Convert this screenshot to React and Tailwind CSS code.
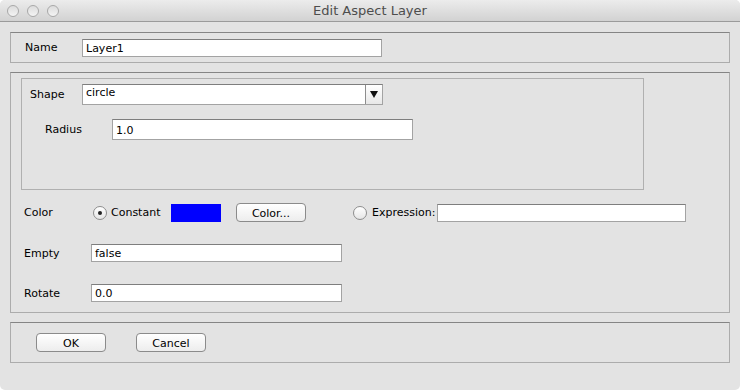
import React from "react";

const font = { fontFamily: '"Lucida Grande", "DejaVu Sans", sans-serif' };

const Field = ({ value, className }) => (
  <div
    className={`h-[18px] bg-white border border-[#a3a3a3] border-t-[#7e7e7e] flex items-center pl-[3px] pt-px text-[11px] text-black leading-none ${className}`}
  >
    {value}
  </div>
);

const Radio = ({ checked }) => (
  <div className="w-[14px] h-[14px] rounded-full border border-[#8d8d8d] bg-gradient-to-b from-white to-[#e6e6e6] flex items-center justify-center shrink-0">
    {checked && <div className="w-[4px] h-[4px] rounded-full bg-[#222]" />}
  </div>
);

const Button = ({ label, className }) => (
  <div
    className={`h-[19px] rounded-[4px] border border-[#8b8b8b] bg-gradient-to-b from-white to-[#ededed] flex items-center justify-center pt-px text-[11px] text-black leading-none ${className}`}
  >
    {label}
  </div>
);

const Panel = ({ className, children }) => (
  <div className={`border border-[#acacac] border-t-[#858585] ${className}`}>
    {children}
  </div>
);

export default function App() {
  return (
    <div className="w-[740px] h-[390px] bg-white" style={font}>
      <div className="w-[740px] h-[390px] bg-[#e3e3e3] rounded-[5px] overflow-hidden flex flex-col">
        {/* title bar */}
        <div className="h-[22px] shrink-0 bg-gradient-to-b from-[#ececec] to-[#d2d2d2] border-b border-[#9b9b9b] flex items-center relative">
          <div className="flex gap-[8px] pl-[7px]">
            {[0, 1, 2].map((i) => (
              <div
                key={i}
                className="w-[12px] h-[12px] rounded-full border border-[#a8a8a8] bg-gradient-to-b from-[#dcdcdc] to-[#f4f4f4]"
              />
            ))}
          </div>
          <div className="absolute inset-0 flex items-center justify-center text-[13px] text-[#4d4d4d]">
            Edit Aspect Layer
          </div>
        </div>

        <div className="flex flex-col px-[10px] pt-[10px]">
          {/* Name */}
          <Panel className="h-[31px] flex items-center">
            <div className="w-[71px] pl-[14px] pt-[2px] text-[11px] text-black">Name</div>
            <Field value="Layer1" className="w-[300px]" />
          </Panel>

          {/* Properties */}
          <Panel className="mt-[9px] h-[241px] flex flex-col pl-[10px] pt-[5px]">
            <div className="w-[623px] h-[112px] border border-[#b0b0b0] flex flex-col">
              <div className="flex items-center mt-[5px]">
                <div className="w-[60px] pl-[8px] pt-[2px] text-[11px] text-black">Shape</div>
                <div className="w-[301px] h-[21px] flex border border-[#a3a3a3] border-t-[#7e7e7e] bg-white">
                  <div className="flex-1 pl-[3px] text-[11px] text-black leading-[16px]">circle</div>
                  <div className="w-[17px] h-full border-l border-[#8d8d8d] bg-gradient-to-b from-white to-[#e8e8e8] flex items-center justify-center">
                    <svg width="8" height="7" viewBox="0 0 8 7">
                      <path d="M0 0 H8 L4 7 Z" fill="#111" />
                    </svg>
                  </div>
                </div>
              </div>
              <div className="flex items-center mt-[14px]">
                <div className="w-[90px] pl-[23px] pt-[2px] text-[11px] text-black">Radius</div>
                <Field value="1.0" className="w-[301px] h-[21px]" />
              </div>
            </div>

            {/* Color row */}
            <div className="flex items-center mt-[13px] h-[19px]">
              <div className="w-[72px] pl-[3px] pt-[2px] text-[11px] text-black">Color</div>
              <Radio checked />
              <div className="ml-[4px] w-[60px] pt-px text-[11px] text-black">Constant</div>
              <div className="w-[50px] h-[18px] bg-[#0000ff]" />
              <Button label="Color..." className="ml-[15px] w-[70px]" />
              <div className="ml-[47px]">
                <Radio />
              </div>
              <div className="ml-[5px] w-[65px] pt-px text-[11px] text-black">Expression:</div>
              <Field value="" className="w-[249px]" />
            </div>

            <div className="flex items-center mt-[22px]">
              <div className="w-[70px] pl-[3px] pt-[2px] text-[11px] text-black">Empty</div>
              <Field value="false" className="w-[251px]" />
            </div>

            <div className="flex items-center mt-[21px]">
              <div className="w-[70px] pl-[3px] pt-[2px] text-[11px] text-black">Rotate</div>
              <Field value="0.0" className="w-[251px]" />
            </div>
          </Panel>

          {/* Buttons */}
          <Panel className="mt-[9px] h-[41px] flex items-center pl-[25px]">
            <Button label="OK" className="w-[70px]" />
            <Button label="Cancel" className="ml-[30px] w-[70px]" />
          </Panel>
        </div>
      </div>
    </div>
  );
}
